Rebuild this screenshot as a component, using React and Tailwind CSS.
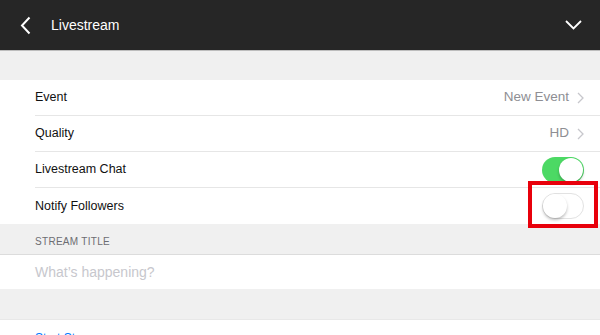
import { useState } from "react";

function Toggle({ on }) {
  return (
    <div
      className={`relative w-[42px] h-[26px] rounded-full ${
        on ? "bg-[#4cd964]" : "bg-white border border-[#e2e2e2]"
      }`}
    >
      <div
        className={`absolute w-[24px] h-[24px] rounded-full bg-white shadow-[0_2px_3px_rgba(0,0,0,0.25)] ${
          on ? "top-[1px] right-[1px]" : "left-0 top-0"
        }`}
      />
    </div>
  );
}

function Chevron() {
  return (
    <svg width="7" height="12" viewBox="0 0 7 12" className="ml-[8px]">
      <path d="M1 1l5 5-5 5" fill="none" stroke="#c7c7cc" strokeWidth="1.3" />
    </svg>
  );
}

function Row({ label, value, toggle, last }) {
  return (
    <div className="pl-[35px]">
      <div
        className={`h-[36px] flex items-center justify-between pr-[16px] ${
          last ? "h-[35px]" : "border-b border-[#e6e6e6]"
        }`}
      >
        <span className="text-[12.5px] text-[#111]">{label}</span>
        {value && (
          <span className="flex items-center text-[13.5px] text-[#8e8e93]">
            {value}
            <Chevron />
          </span>
        )}
        {toggle}
      </div>
    </div>
  );
}

export default function App() {
  const [chat] = useState(true);
  const [notify] = useState(false);

  return (
    <div className="w-[600px] h-[335px] overflow-hidden bg-[#f0f0f0] font-['Liberation_Sans',Arial,sans-serif] relative">
      {/* header */}
      <div className="h-[51px] bg-[#262626] border-b border-[#bdbdbd] flex items-center px-[20px]">
        <svg width="11" height="19" viewBox="0 0 11 19">
          <path d="M9.5 1.5L2 9.5l7.5 8" fill="none" stroke="#fff" strokeWidth="2" />
        </svg>
        <span className="ml-[20px] text-[14px] text-white">Livestream</span>
        <svg width="17" height="10" viewBox="0 0 17 10" className="ml-auto mr-[-2px]">
          <path d="M1 1l7.5 7.5L16 1" fill="none" stroke="#fff" strokeWidth="1.8" />
        </svg>
      </div>

      <div className="h-[29px]" />

      <div className="bg-white">
        <Row label="Event" value="New Event" />
        <Row label="Quality" value="HD" />
        <Row label="Livestream Chat" toggle={<Toggle on={chat} />} />
        <Row label="Notify Followers" toggle={<Toggle on={notify} />} last />
      </div>

      <div className="h-[31px] flex items-end pl-[35px] pb-[5px] border-b border-[#dcdcdc]">
        <span className="text-[10px] tracking-[0.3px] text-[#6d6d72]">STREAM TITLE</span>
      </div>
      <div className="h-[34px] bg-white flex items-center pl-[35px]">
        <span className="text-[14px] text-[#c7c7cd]">What’s happening?</span>
      </div>

      <div className="h-[31px] border-b border-[#e8e8e8]" />
      <div className="bg-white h-[40px] pl-[35px] pt-[9px] leading-[15px]">
        <span className="text-[12px] text-[#007aff]">Start Stream</span>
      </div>

      {/* highlight box */}
      <div className="absolute left-[528px] top-[181px] w-[70px] h-[47px] border-[4px] border-[#e8000b]" />
    </div>
  );
}
